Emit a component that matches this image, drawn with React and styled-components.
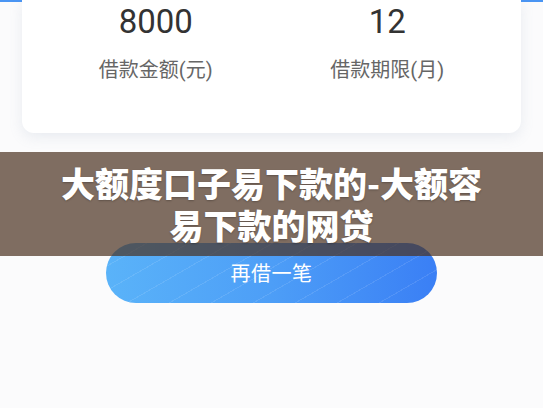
import React from 'react';
import styled, { createGlobalStyle } from 'styled-components';

const GlobalStyle = createGlobalStyle`
  html, body {
    margin: 0;
    padding: 0;
    background: #fbfbfc;
  }
  body {
    font-family: Roboto, "Noto Sans CJK SC", sans-serif;
  }
`;

const Page = styled.div`
  position: relative;
  width: 543px;
  height: 408px;
  overflow: hidden;
  background: #fbfbfc;
`;

// blue top strip peeking out behind the summary card
const Header = styled.div`
  height: 2px;
  background: #4a95f3;
`;

const Card = styled.div`
  margin: -2px 22px 0;
  padding: 2px 18px 49px;
  background: #fff;
  border-radius: 0 0 12px 12px;
  box-shadow: 0 4px 14px rgba(120, 140, 170, 0.14);
  display: grid;
  grid-template-columns: 1fr 1fr;
`;

const Stat = styled.div`
  display: flex;
  flex-direction: column;
  align-items: center;
`;

const Value = styled.div`
  font-family: Roboto, sans-serif;
  font-size: 33px;
  line-height: 40px;
  color: #333;
`;

const Label = styled.div`
  margin-top: 14px;
  font-family: Roboto, "Noto Sans CJK SC", sans-serif;
  font-size: 20px;
  line-height: 28px;
  color: #666;
`;

const Actions = styled.div`
  display: flex;
  justify-content: center;
  margin-top: 110px;
`;

const PrimaryButton = styled.button`
  width: 331px;
  height: 60px;
  border: none;
  border-radius: 30px;
  background:
    repeating-linear-gradient(
      150deg,
      rgba(255, 255, 255, 0) 0 20px,
      rgba(255, 255, 255, 0.1) 20px 21px
    ),
    linear-gradient(90deg, #5ab3f9 0%, #4d9ef7 50%, #3a7ff5 100%);
  color: #fff;
  font-family: "Noto Sans CJK SC", sans-serif;
  font-size: 20px;
  line-height: 1;
  letter-spacing: 0.5px;
`;

// caption bar laid over the page content
const Caption = styled.div`
  position: absolute;
  left: 0;
  right: 0;
  top: 152px;
  height: 104px;
  box-sizing: border-box;
  padding: 10px 0;
  background: rgba(74, 48, 31, 0.7);
  display: flex;
  justify-content: center;
`;

const CaptionText = styled.div`
  max-width: 440px;
  text-align: center;
  color: #fff;
  font-family: "Noto Sans CJK SC", sans-serif;
  font-weight: 900;
  font-size: 34px;
  line-height: 42px;
  text-shadow: 0 1px 2px rgba(0, 0, 0, 0.25);
`;

const stats = [
  { value: '8000', label: '借款金额(元)' },
  { value: '12', label: '借款期限(月)' },
];

const App = () => (
  <Page>
    <GlobalStyle />
    <Header />
    <Card>
      {stats.map((s) => (
        <Stat key={s.label}>
          <Value>{s.value}</Value>
          <Label>{s.label}</Label>
        </Stat>
      ))}
    </Card>
    <Actions>
      <PrimaryButton>再借一笔</PrimaryButton>
    </Actions>
    <Caption>
      <CaptionText>大额度口子易下款的-大额容易下款的网贷</CaptionText>
    </Caption>
  </Page>
);

export default App;
